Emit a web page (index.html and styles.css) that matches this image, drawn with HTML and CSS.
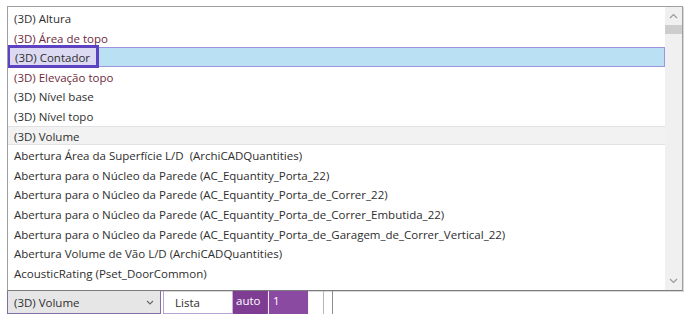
FILE: index.html
```html
<!DOCTYPE html>
<html lang="pt">
<head>
  <meta charset="UTF-8" />
  <title>Lista de parâmetros</title>
  <link rel="stylesheet" href="styles.css">
</head>
<body>

  <div class="dropdown">
    <ul class="options">
      <li>(3D) Altura</li>
      <li class="red">(3D) Área de topo</li>
      <li class="selected"><span class="mark">(3D) Contador</span></li>
      <li class="red">(3D) Elevação topo</li>
      <li>(3D) Nível base</li>
      <li>(3D) Nível topo</li>
      <li class="hover">(3D) Volume</li>
      <li>Abertura Área da Superfície L/D&nbsp; (ArchiCADQuantities)</li>
      <li>Abertura para o Núcleo da Parede (AC_Equantity_Porta_22)</li>
      <li>Abertura para o Núcleo da Parede (AC_Equantity_Porta_de_Correr_22)</li>
      <li>Abertura para o Núcleo da Parede (AC_Equantity_Porta_de_Correr_Embutida_22)</li>
      <li>Abertura para o Núcleo da Parede (AC_Equantity_Porta_de_Garagem_de_Correr_Vertical_22)</li>
      <li>Abertura Volume de Vão L/D (ArchiCADQuantities)</li>
      <li>AcousticRating (Pset_DoorCommon)</li>
    </ul>
    <div class="scrollbar">
      <svg class="arrow" width="9" height="6" viewBox="0 0 9 6"><path d="M1 5 L4.5 1.5 L8 5" fill="none" stroke="#9a9a9a" stroke-width="1.2"/></svg>
      <div class="thumb"></div>
      <div class="track"></div>
      <svg class="arrow" width="9" height="6" viewBox="0 0 9 6"><path d="M1 1 L4.5 4.5 L8 1" fill="none" stroke="#9a9a9a" stroke-width="1.2"/></svg>
    </div>
  </div>

  <div class="toolbar">
    <div class="combo">
      <span>(3D) Volume</span>
      <svg width="8" height="5" viewBox="0 0 8 5"><path d="M1 1 L4 4 L7 1" fill="none" stroke="#666" stroke-width="1.1"/></svg>
    </div>
    <div class="field">Lista</div>
    <div class="tag">auto</div>
    <div class="tag light">1</div>
    <div class="divider"></div>
    <div class="divider"></div>
  </div>

</body>
</html>
```

FILE: styles.css
```css
body {
  margin: 0;
  padding: 6px 0 0 7px;
  background: #fff;
  font-family: "Open Sans", "Noto Sans", sans-serif;
  font-size: 11.5px;
  color: #2e2e2e;
}

.dropdown {
  display: flex;
  width: 676px;
  height: 285px;
  box-sizing: border-box;
  border: 1px solid #a0a0a0;
  border-bottom-color: #7d7d7d;
  box-shadow: 1px 1px 0 #d8d8d8;
  background: #fff;
  overflow: hidden;
}

.options {
  flex: 1;
  list-style: none;
  margin: 0;
  padding: 1px 0 0 0;
}

.options li {
  height: 19.6px;
  line-height: 21px;
  padding-left: 6px;
  box-sizing: border-box;
  white-space: nowrap;
}

.options li.red {
  color: #6e2a3c;
}

.options li.selected {
  background: #b9e1f3;
  border: 1px solid #9c94dc;
  line-height: 19px;
  padding-left: 0;
}

.options li.hover {
  background: #f2f2f2;
  border-top: 1px solid #e2e2e2;
  border-bottom: 1px solid #e2e2e2;
  line-height: 19px;
}

.mark {
  display: inline-block;
  margin: -3px 0 0 -2px;
  padding: 0 6px 0 5px;
  height: 23px;
  line-height: 19px;
  border: 3px solid #5d43c2;
  box-sizing: border-box;
  background: #dcdaf2;
  vertical-align: top;
}

.scrollbar {
  width: 17px;
  display: flex;
  flex-direction: column;
  align-items: center;
  background: #f0f0f0;
}

.scrollbar .arrow {
  margin: 6px 0;
}

.thumb {
  width: 17px;
  height: 9px;
  background: #cdcdcd;
}

.track {
  flex: 1;
}

.toolbar {
  display: flex;
  height: 23px;
}

.combo {
  display: flex;
  align-items: center;
  justify-content: space-between;
  width: 154px;
  padding: 0 6px;
  box-sizing: border-box;
  background: #e6e6e6;
  border: 1px solid #7e6fa6;
  border-top: none;
}

.field {
  width: 70px;
  margin-left: 2px;
  padding-left: 11px;
  box-sizing: border-box;
  line-height: 23px;
  border: 1px solid #b9a2cf;
  border-top: none;
}

.tag {
  width: 35px;
  padding-left: 3px;
  box-sizing: border-box;
  line-height: 20px;
  color: #fff;
  background: #7e3d93;
  box-shadow: 0 2px 2px #f1d9ee;
}

.tag.light {
  width: 39px;
  margin-left: 1px;
  padding-left: 4px;
  background: #8b4aa2;
}

.divider {
  width: 1px;
  margin-left: 15px;
  background: #b6b6b6;
}

.divider + .divider {
  margin-left: 8px;
  background: #8e8e8e;
}
```
